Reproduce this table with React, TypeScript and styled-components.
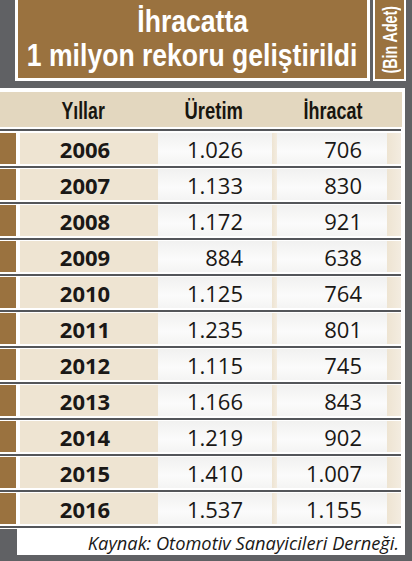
import React from 'react';
import styled, { createGlobalStyle } from 'styled-components';

const GlobalStyle = createGlobalStyle`
  body {
    margin: 0;
    background: #606164;
  }
`;

const heading = `"Liberation Sans", Arial, sans-serif`;
const body = `"Open Sans", "Noto Sans", sans-serif`;

const BROWN = '#9a723f';
const BEIGE = '#e3d7bf';
const PALE = '#eee4d2';
const LINE = '#54565a';

const Page = styled.div`
  width: 412px;
  height: 561px;
  overflow: hidden;
  background: #606164;
`;

// Narrow display type: the print face is a bold condensed, squeezed here
const Condensed = styled.span<{ $k: number; $origin?: string }>`
  display: inline-block;
  white-space: nowrap;
  transform: scaleX(${(p) => p.$k});
  transform-origin: ${(p) => p.$origin || 'center'};
`;

// Title strip
const TitleRow = styled.div`
  display: flex;
  gap: 3px;
  height: 81px;
  padding-left: 15px;
`;

const TitleBox = styled.div`
  box-sizing: border-box;
  width: 355px;
  border: 3px solid #fff;
  border-top: 0;
  background: ${BROWN};
  display: flex;
  flex-direction: column;
  align-items: center;
  justify-content: center;
  padding-bottom: 3px;
  color: #fff;
  font-family: ${heading};
  font-weight: 700;
  font-size: 32px;
  line-height: 34px;
`;

const UnitBox = styled.div`
  box-sizing: border-box;
  width: 33px;
  border: 2px solid #fff;
  border-top: 0;
  background: ${BROWN};
  display: flex;
  align-items: center;
  justify-content: center;
`;

const UnitText = styled.span`
  writing-mode: vertical-rl;
  white-space: nowrap;
  transform: rotate(180deg) scaleY(0.68);
  color: #fff;
  font-family: ${heading};
  font-weight: 700;
  font-size: 21px;
  line-height: 1;
`;

// Table
const Table = styled.div`
  margin-top: 7px;
  width: 405px;
`;

const cols = '16px 4px 138px 114px 5px 110px 14px';

const Header = styled.div`
  display: grid;
  grid-template-columns: ${cols};
  height: 35px;
  background: ${BEIGE};
  border-top: 4px solid #fff;
  border-right: 3px solid #fff;
`;

const HeadLabel = styled.div<{ $col: string; $pad?: number; $align?: string }>`
  grid-column: ${(p) => p.$col};
  display: flex;
  align-items: center;
  justify-content: ${(p) => p.$align || 'flex-end'};
  padding-top: 3px;
  padding-right: ${(p) => p.$pad || 0}px;
  font-family: ${heading};
  font-weight: 700;
  font-size: 23px;
  color: #17150f;
`;

const Separator = styled.div<{ $top?: number }>`
  box-sizing: border-box;
  padding: ${(p) => p.$top ?? 2}px 4px ${(p) => (p.$top ? 2 : 1)}px 0;
  background: #fff;

  &::before {
    content: '';
    display: block;
    height: 2px;
    background: ${LINE};
  }
`;

const Row = styled.div`
  display: grid;
  grid-template-columns: ${cols};
  height: 31px;
  background: #fff;
`;

const Tab = styled.div`
  background: ${BROWN};
`;

const Gap = styled.div`
  background: #fff;
`;

const Strip = styled.div`
  background: linear-gradient(to right, ${PALE}, #f3ece0);
`;

const YearCell = styled.div`
  display: flex;
  align-items: center;
  justify-content: center;
  padding-right: 8px;
  background: ${PALE};
  font-family: ${body};
  font-weight: 700;
  font-size: 22px;
  color: #1a1816;
`;

const NumCell = styled.div<{ $pad: number }>`
  display: flex;
  align-items: center;
  justify-content: flex-end;
  padding-right: ${(p) => p.$pad}px;
  background: linear-gradient(to bottom, #f1f1f0, #fbfbfb 60%, #f4f4f3);
  font-family: ${body};
  font-weight: 400;
  font-size: 22px;
  color: #1a1816;
`;

const Footer = styled.div`
  box-sizing: border-box;
  margin-left: 17px;
  width: 388px;
  height: 26px;
  display: flex;
  align-items: center;
  justify-content: flex-end;
  padding-right: 6px;
  background: #fff;
  font-family: ${body};
  font-style: italic;
  font-size: 18.3px;
  color: #1a1816;
`;

const data: [string, string, string][] = [
  ['2006', '1.026', '706'],
  ['2007', '1.133', '830'],
  ['2008', '1.172', '921'],
  ['2009', '884', '638'],
  ['2010', '1.125', '764'],
  ['2011', '1.235', '801'],
  ['2012', '1.115', '745'],
  ['2013', '1.166', '843'],
  ['2014', '1.219', '902'],
  ['2015', '1.410', '1.007'],
  ['2016', '1.537', '1.155'],
];

const App: React.FC = () => {
  return (
    <Page>
      <GlobalStyle />
      <TitleRow>
        <TitleBox>
          <Condensed $k={0.83}>İhracatta</Condensed>
          <Condensed $k={0.83}>1 milyon rekoru geliştirildi</Condensed>
        </TitleBox>
        <UnitBox>
          <UnitText>(Bin Adet)</UnitText>
        </UnitBox>
      </TitleRow>

      <Table>
        <Header>
          <HeadLabel $col="3" $align="center" $pad={12}>
            <Condensed $k={0.77}>Yıllar</Condensed>
          </HeadLabel>
          <HeadLabel $col="4" $pad={29}>
            <Condensed $k={0.8} $origin="right">Üretim</Condensed>
          </HeadLabel>
          <HeadLabel $col="6" $pad={25}>
            <Condensed $k={0.78} $origin="right">İhracat</Condensed>
          </HeadLabel>
        </Header>
        <Separator $top={2} />
        {data.map(([year, prod, exp]) => (
          <React.Fragment key={year}>
            <Row>
              <Tab />
              <Gap />
              <YearCell>{year}</YearCell>
              <NumCell $pad={29}>{prod}</NumCell>
              <Strip />
              <NumCell $pad={25}>{exp}</NumCell>
              <Strip />
            </Row>
            <Separator />
          </React.Fragment>
        ))}
        <Footer>Kaynak: Otomotiv Sanayicileri Derneği.</Footer>
      </Table>
    </Page>
  );
};

export default App;
